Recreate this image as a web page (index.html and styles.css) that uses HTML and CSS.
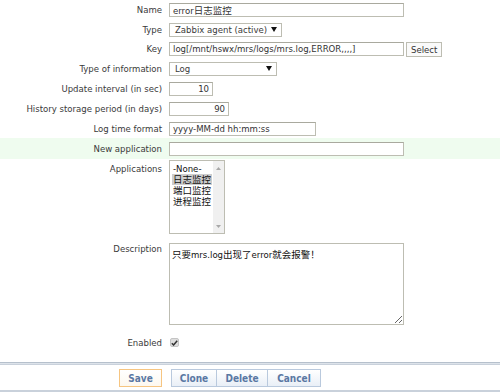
FILE: index.html
```html
<!DOCTYPE html>
<html lang="en">
<head>
    <meta charset="UTF-8">
    <title>Item configuration</title>
    <link rel="stylesheet" href="styles.css">
</head>
<body>
    <div class="form">
        <div class="row r20">
            <div class="lbl">Name</div>
            <div class="ctl"><input class="txt w-long" type="text" value="error日志监控"></div>
        </div>
        <div class="row r19">
            <div class="lbl">Type</div>
            <div class="ctl">
                <div class="select w-type">Zabbix agent (active)<svg class="arrow" width="6" height="5" viewBox="0 0 6 5"><path d="M0 0H6L3 5Z" fill="#111"/></svg></div>
            </div>
        </div>
        <div class="row r19">
            <div class="lbl">Key</div>
            <div class="ctl">
                <input class="txt w-long" type="text" value="log[/mnt/hswx/mrs/logs/mrs.log,ERROR,,,,]">
                <button class="btn-plain">Select</button>
            </div>
        </div>
        <div class="row r21">
            <div class="lbl">Type of information</div>
            <div class="ctl">
                <div class="select w-info">Log<svg class="arrow" width="6" height="5" viewBox="0 0 6 5"><path d="M0 0H6L3 5Z" fill="#111"/></svg></div>
            </div>
        </div>
        <div class="row r19">
            <div class="lbl">Update interval (in sec)</div>
            <div class="ctl"><input class="txt num w-int" type="text" value="10"></div>
        </div>
        <div class="row r21">
            <div class="lbl">History storage period (in days)</div>
            <div class="ctl"><input class="txt num w-hist" type="text" value="90"></div>
        </div>
        <div class="row r19">
            <div class="lbl">Log time format</div>
            <div class="ctl"><input class="txt w-fmt" type="text" value="yyyy-MM-dd hh:mm:ss"></div>
        </div>
        <div class="row r21 new-app">
            <div class="lbl">New application</div>
            <div class="ctl"><input class="txt w-long" type="text" value=""></div>
        </div>
        <div class="row top r-apps">
            <div class="lbl">Applications</div>
            <div class="ctl">
                <div class="listbox">
                    <div class="items">
                        <div class="item">-None-</div>
                        <div class="item selected">日志监控</div>
                        <div class="item">端口监控</div>
                        <div class="item">进程监控</div>
                    </div>
                    <div class="scroll">
                        <svg width="5" height="3" viewBox="0 0 5 3"><path d="M0 3H5L2.5 0Z" fill="#a8a8a8"/></svg>
                        <svg width="5" height="3" viewBox="0 0 5 3"><path d="M0 0H5L2.5 3Z" fill="#a8a8a8"/></svg>
                    </div>
                </div>
            </div>
        </div>
        <div class="row top r-desc">
            <div class="lbl">Description</div>
            <div class="ctl"><textarea class="area">只要mrs.log出现了error就会报警！</textarea></div>
        </div>
        <div class="row r-enabled">
            <div class="lbl">Enabled</div>
            <div class="ctl">
                <span class="check"><svg width="7" height="6" viewBox="0 0 7 6"><path d="M0.8 3.2L2.6 5L6.2 0.8" fill="none" stroke="#333" stroke-width="1.5"/></svg></span>
            </div>
        </div>
    </div>
    <div class="footer">
        <button class="btn save">Save</button>
        <div class="group">
            <button class="btn b-clone">Clone</button>
            <button class="btn b-delete">Delete</button>
            <button class="btn b-cancel">Cancel</button>
        </div>
    </div>
</body>
</html>
```

FILE: styles.css
```css
body {
    margin: 0;
    background: #fff;
    font-family: "DejaVu Sans Condensed", "Noto Sans CJK SC", sans-serif;
    font-size: 9.5px;
    color: #3a3a3a;
}
.row {
    display: grid;
    grid-template-columns: 162px auto;
    column-gap: 7px;
    align-items: center;
}
.row.top {
    align-items: start;
}
.r19 { height: 19px; }
.r20 { height: 20px; }
.r21 { height: 21px; }
.r-apps { height: 78px; }
.r-desc { height: 93px; }
.r-enabled { height: 25px; }
.new-app {
    background: #effcef;
}
.lbl {
    text-align: right;
    line-height: 14px;
    white-space: nowrap;
}
.r-apps .lbl { padding-top: 3px; }
.r-desc .lbl { padding-top: 5px; }
.ctl {
    display: flex;
    align-items: center;
    gap: 2px;
}
.txt {
    box-sizing: border-box;
    height: 14px;
    margin: 0;
    padding: 0 3px;
    border: 1px solid #bdbdb2;
    border-top-color: #a9a99e;
    font-family: inherit;
    font-size: 9.5px;
    color: #333;
    outline: none;
}
.num { text-align: right; }
.w-long { width: 235px; }
.w-int { width: 44px; }
.w-hist { width: 60px; }
.w-fmt { width: 147px; }
.select {
    box-sizing: border-box;
    height: 14px;
    display: flex;
    align-items: center;
    padding-left: 5px;
    border: 1px solid #bdbdb2;
    position: relative;
    line-height: 12px;
}
.w-type { width: 113px; }
.w-info { width: 108px; }
.arrow {
    position: absolute;
    right: 4px;
    top: 3px;
}
.btn-plain {
    box-sizing: border-box;
    height: 15px;
    margin: 0 0 -1px 0;
    padding: 0 4px;
    border: 1px solid #bdbdb2;
    background: #fafafa;
    font-family: inherit;
    font-size: 9.5px;
    color: #333;
}
.listbox {
    box-sizing: border-box;
    width: 56px;
    height: 74px;
    margin-top: 1px;
    border: 1px solid #bdbdb2;
    display: flex;
}
.items {
    flex: 1;
    padding: 2px 1px 0 2px;
    color: #111;
}
.item {
    height: 11px;
    line-height: 11px;
    padding-left: 1px;
    font-size: 9.5px;
    white-space: nowrap;
}
.item.selected {
    background: #cdcdcd;
}
.scroll {
    width: 11px;
    background: #f0f0f0;
    display: flex;
    flex-direction: column;
    justify-content: space-between;
    align-items: center;
    padding: 6px 0 5px;
}
.area {
    box-sizing: border-box;
    width: 235px;
    height: 82px;
    margin: 6px 0 0;
    padding: 3px 2px;
    border: 1px solid #bdbdb2;
    font-family: inherit;
    font-size: 9.5px;
    color: #111;
    outline: none;
}
.check {
    box-sizing: border-box;
    width: 9px;
    height: 9px;
    margin-left: 1px;
    border: 1px solid #c4c4c4;
    border-radius: 2px;
    background: #dedede;
    display: flex;
    align-items: center;
    justify-content: center;
}
.footer {
    margin-top: 7px;
    border-top: 1px solid #b6c0cc;
    box-shadow: inset 0 1px 0 #dde3ea, inset 0 2px 0 #c9d1db;
    border-bottom: 2px solid #c9d1db;
    padding: 6px 0 3px 119px;
    display: flex;
    gap: 9px;
}
.group {
    display: flex;
}
.btn {
    box-sizing: border-box;
    height: 18px;
    margin: 0;
    padding: 0;
    border: 1px solid #b9c9dd;
    background: linear-gradient(#ffffff, #e9eff7);
    font-family: inherit;
    font-size: 10px;
    font-weight: bold;
    color: #5a78a3;
}
.group .btn + .btn {
    border-left: none;
}
.b-clone { width: 46px; }
.b-delete { width: 51px; }
.b-cancel { width: 53px; }
.btn.save {
    border-color: #f6c581;
    background: linear-gradient(#ffffff, #fdf8ef);
    width: 43px;
}
```
